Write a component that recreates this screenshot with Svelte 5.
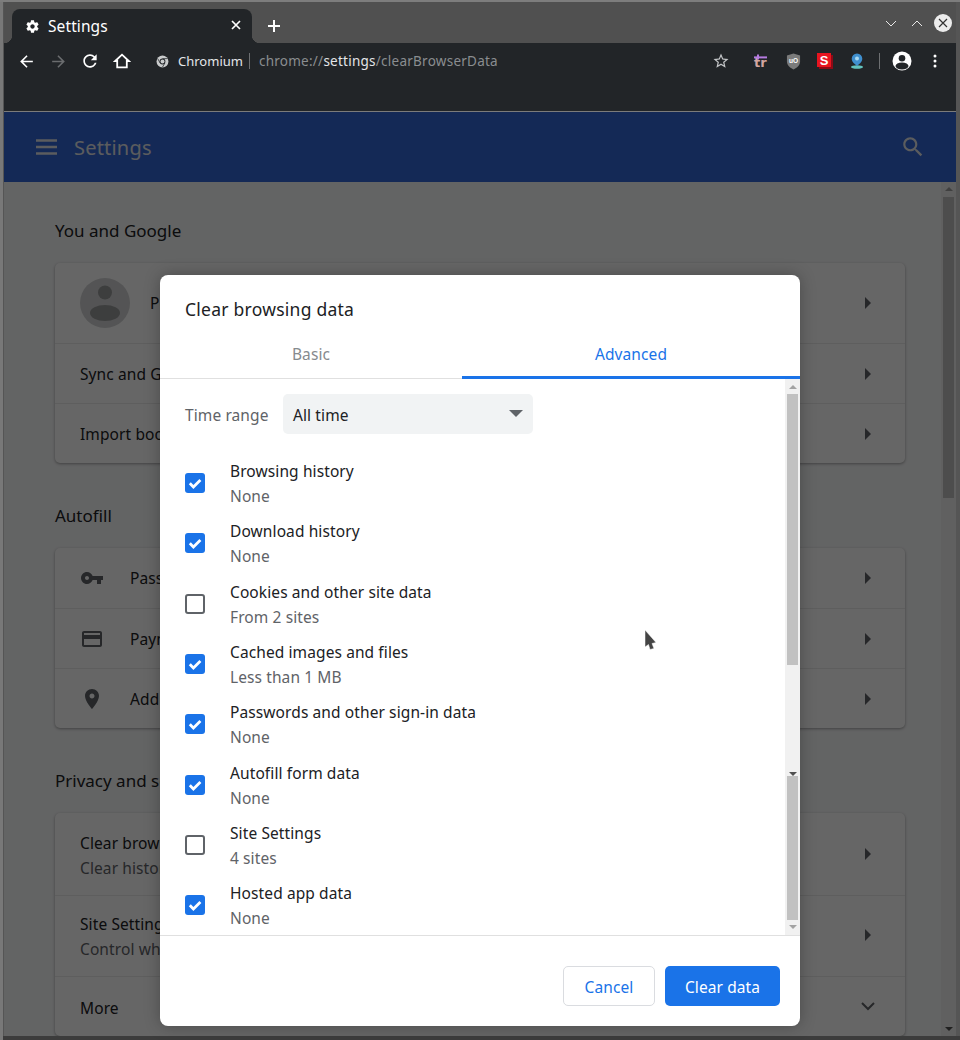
<script>
  const rows = [
    { t: 'Browsing history', s: 'None', c: true },
    { t: 'Download history', s: 'None', c: true },
    { t: 'Cookies and other site data', s: 'From 2 sites', c: false },
    { t: 'Cached images and files', s: 'Less than 1 MB', c: true },
    { t: 'Passwords and other sign-in data', s: 'None', c: true },
    { t: 'Autofill form data', s: 'None', c: true },
    { t: 'Site Settings', s: '4 sites', c: false },
    { t: 'Hosted app data', s: 'None', c: true }
  ];
  const icons = {
    key: 'M12.65 10C11.83 7.67 9.61 6 7 6c-3.31 0-6 2.69-6 6s2.69 6 6 6c2.61 0 4.83-1.67 5.65-4H17v4h4v-4h2v-4H12.65zM7 14c-1.1 0-2-.9-2-2s.9-2 2-2 2 .9 2 2-.9 2-2 2z',
    card: 'M20 4H4c-1.11 0-1.99.89-1.99 2L2 18c0 1.11.89 2 2 2h16c1.11 0 2-.89 2-2V6c0-1.11-.89-2-2-2zm0 14H4v-6h16v6zm0-10H4V6h16v2z',
    place: 'M12 2C8.13 2 5 5.13 5 9c0 5.25 7 13 7 13s7-7.75 7-13c0-3.87-3.13-7-7-7zm0 9.5c-1.38 0-2.5-1.12-2.5-2.5s1.12-2.5 2.5-2.5 2.5 1.12 2.5 2.5-1.12 2.5-2.5 2.5z'
  };
  const autofill = [
    { i: 'key', t: 'Passwords' },
    { i: 'card', t: 'Payment methods' },
    { i: 'place', t: 'Addresses and more' }
  ];
</script>

<div class="win">
  <div class="strip">
    <div class="tab">
      <svg class="gear" viewBox="0 0 24 24" width="15" height="15"><path fill="#fff" d="M19.43 12.98c.04-.32.07-.64.07-.98s-.03-.66-.07-.98l2.11-1.65c.19-.15.24-.42.12-.64l-2-3.46c-.12-.22-.39-.3-.61-.22l-2.49 1c-.52-.4-1.08-.73-1.69-.98l-.38-2.65C14.46 2.18 14.25 2 14 2h-4c-.25 0-.46.18-.49.42l-.38 2.65c-.61.25-1.17.59-1.69.98l-2.49-1c-.23-.09-.49 0-.61.22l-2 3.46c-.13.22-.07.49.12.64l2.11 1.65c-.04.32-.07.65-.07.98s.03.66.07.98l-2.11 1.65c-.19.15-.24.42-.12.64l2 3.46c.12.22.39.3.61.22l2.49-1c.52.4 1.08.73 1.69.98l.38 2.65c.03.24.24.42.49.42h4c.25 0 .46-.18.49-.42l.38-2.65c.61-.25 1.17-.59 1.69-.98l2.49 1c.23.09.49 0 .61-.22l2-3.46c.12-.22.07-.49-.12-.64l-2.11-1.65zM12 15.5c-1.93 0-3.5-1.57-3.5-3.5s1.57-3.5 3.5-3.5 3.5 1.57 3.5 3.5-1.57 3.5-3.5 3.5z"/></svg>
      <span class="tabtitle">Settings</span>
      <svg class="tabx" viewBox="0 0 10 10" width="10" height="10"><path d="M1 1l8 8M9 1l-8 8" stroke="#fff" stroke-width="1.7"/></svg>
    </div>
    <svg class="plus" viewBox="0 0 12 12" width="12" height="12"><path d="M6 0v12M0 6h12" stroke="#fff" stroke-width="2"/></svg>
    <div class="wctl">
      <svg class="wd" viewBox="0 0 12 7" width="12" height="7"><path d="M1 1l5 5 5-5" fill="none" stroke="#e8e8e8" stroke-width="1"/></svg>
      <svg class="wu" viewBox="0 0 12 7" width="12" height="7"><path d="M1 6l5-5 5 5" fill="none" stroke="#e8e8e8" stroke-width="1"/></svg>
      <div class="wclose"><svg viewBox="0 0 10 10" width="10" height="10"><path d="M1 1l8 8M9 1l-8 8" stroke="#333" stroke-width="1.2"/></svg></div>
    </div>
  </div>

  <div class="toolbar">
    <div class="tbrow">
      <div class="ib"><svg viewBox="0 0 24 24" width="19" height="19"><path fill="#fff" d="M20 11H7.83l5.59-5.59L12 4l-8 8 8 8 1.41-1.41L7.83 13H20v-2z"/></svg></div>
      <div class="ib"><svg viewBox="0 0 24 24" width="19" height="19"><path fill="#6a6c6e" d="M12 4l-1.41 1.41L16.17 11H4v2h12.17l-5.58 5.59L12 20l8-8z"/></svg></div>
      <div class="ib"><svg viewBox="0 0 24 24" width="20" height="20"><path fill="#fff" d="M17.65 6.35C16.2 4.9 14.21 4 12 4c-4.42 0-7.99 3.58-7.99 8s3.57 8 7.99 8c3.73 0 6.84-2.55 7.73-6h-2.08c-.82 2.33-3.04 4-5.65 4-3.31 0-6-2.69-6-6s2.69-6 6-6c1.66 0 3.14.69 4.22 1.78L13 11h7V4l-2.35 2.35z"/></svg></div>
      <div class="ib"><svg viewBox="0 0 24 24" width="18" height="18"><path fill="none" stroke="#fff" stroke-width="2.4" d="M3 12L12 3.6 21 12h-2.6v8.400H5.600V12z"/></svg></div>
      <div class="origin">
        <svg viewBox="0 0 14 14" width="13" height="13"><circle cx="7" cy="7" r="6.4" fill="#c9cbcc"/><circle cx="7" cy="7" r="3.1" fill="#222528"/><circle cx="7" cy="7" r="2.1" fill="#c9cbcc"/><path d="M7 3.9h5.4M4.4 8.6L1.9 4M9.6 8.6L7 13" stroke="#222528" stroke-width=".8"/></svg>
        <span class="oname">Chromium</span>
        <span class="osep"></span>
        <span class="url">chrome://<b>settings</b>/clearBrowserData</span>
      </div>
      <div class="tright">
        <div class="ib star"><svg viewBox="0 0 24 24" width="18" height="18"><path fill="#c4c6c8" d="M22 9.24l-7.19-.62L12 2 9.19 8.63 2 9.24l5.46 4.73L5.82 21 12 17.27 18.18 21l-1.63-7.03L22 9.24zM12 15.4l-3.76 2.27 1-4.28-3.32-2.88 4.38-.38L12 6.1l1.71 4.04 4.38.38-3.32 2.88 1 4.28L12 15.4z"/></svg></div>
        <div class="ib ext1"><svg viewBox="0 0 16 16" width="16" height="16"><text x="1" y="13.5" font-family="DejaVu Sans" font-weight="700" font-size="13" fill="#d3a6a0">tr</text><rect x="1" y="3.4" width="13" height="2" fill="#b57be0"/><rect x="4" y="1.5" width="2" height="5" fill="#b57be0"/></svg></div>
        <div class="ib"><svg viewBox="0 0 16 18" width="15" height="17"><path fill="#7b7b7b" d="M8 .5L15 2.6V9c0 4-3.2 6.8-7 8.4C4.200 15.800 1 13 1 9V2.600z"/><text x="8" y="11" text-anchor="middle" font-family="Liberation Sans" font-weight="700" font-size="7" fill="#fff">uO</text></svg></div>
        <div class="ib"><svg viewBox="0 0 16 16" width="16" height="16"><rect x="2" y="2" width="14" height="14" fill="#8e0a16"/><rect x="0" y="0" width="14" height="14" fill="#e8141f"/><text x="7" y="11.500" text-anchor="middle" font-family="Liberation Sans" font-weight="700" font-size="13" fill="#fff">S</text></svg></div>
        <div class="ib"><svg viewBox="0 0 14 16" width="14" height="16"><ellipse cx="7" cy="14" rx="6" ry="1.700" fill="#63c2bd"/><path fill="#3f8fce" d="M7 .5a5.300 5.300 0 0 1 5.300 5.300C12.300 8.800 9 11.500 7 13 5 11.500 1.700 8.800 1.700 5.800A5.300 5.300 0 0 1 7 .5z"/><circle cx="7" cy="5.500" r="2" fill="#a8d8f0"/></svg></div>
        <span class="tsep"></span>
        <div class="ib avatar"><svg viewBox="0 0 20 20" width="20" height="20"><defs><clipPath id="ac"><circle cx="10" cy="10" r="9.500"/></clipPath></defs><circle cx="10" cy="10" r="9.500" fill="#fff"/><circle cx="10" cy="7.200" r="3.300" fill="#222528"/><ellipse cx="10" cy="15" rx="6.500" ry="3.500" fill="#222528" clip-path="url(#ac)"/></svg></div>
        <div class="ib dots"><svg viewBox="0 0 4 14" width="4" height="14"><circle cx="2" cy="2" r="1.500" fill="#fff"/><circle cx="2" cy="7" r="1.500" fill="#fff"/><circle cx="2" cy="12" r="1.500" fill="#fff"/></svg></div>
      </div>
    </div>
  </div>

  <div class="content">
    <header class="hdr">
      <div class="hleft">
        <svg viewBox="0 0 21 16" width="21" height="16"><path d="M0 1.500h21M0 8h21M0 14.500h21" stroke="#e3e6ea" stroke-width="2.400"/></svg>
        <span class="htitle">Settings</span>
      </div>
      <svg class="hsearch" viewBox="0 0 24 24" width="26" height="26"><path fill="#e3e6ea" d="M15.500 14h-.79l-.28-.27C15.410 12.590 16 11.110 16 9.500 16 5.910 13.090 3 9.500 3S3 5.910 3 9.500 5.910 16 9.500 16c1.610 0 3.090-.59 4.230-1.570l.27.28v.79l5 4.990L20.490 19l-4.990-5zm-6 0C7.010 14 5 11.990 5 9.500S7.010 5 9.500 5 14 7.010 14 9.500 11.990 14 9.500 14z"/></svg>
    </header>

    <div class="pagewrap">
      <main class="page">
        <h2>You and Google</h2>
        <section class="card">
          <div class="row person">
            <svg class="av" viewBox="0 0 50 50" width="50" height="50"><circle cx="25" cy="25" r="25" fill="#d2d3d4"/><circle cx="25" cy="14.500" r="7" fill="#9a9b9c"/><ellipse cx="25" cy="35" rx="15" ry="8" fill="#9a9b9c"/></svg>
            <span>Person</span><i class="tri"></i>
          </div>
          <div class="row"><span>Sync and Google services</span><i class="tri"></i></div>
          <div class="row"><span>Import bookmarks and settings</span><i class="tri"></i></div>
        </section>

        <h2>Autofill</h2>
        <section class="card">
          {#each autofill as a}
            <div class="row">
              <svg class="ric" viewBox="0 0 24 24" width="24" height="24"><path fill="#5f6368" d={icons[a.i]}/></svg>
              <span>{a.t}</span><i class="tri"></i>
            </div>
          {/each}
        </section>

        <h2>Privacy and security</h2>
        <section class="card">
          <div class="row tall first"><div class="two"><span>Clear browsing data</span><small>Clear history, cookies, cache, and more</small></div><i class="tri"></i></div>
          <div class="row tall second"><div class="two"><span>Site Settings</span><small>Control what information websites can use</small></div><i class="tri"></i></div>
          <div class="row last"><span>More</span><svg class="more" viewBox="0 0 14 9" width="14" height="9"><path d="M1 1l6 6 6-6" fill="none" stroke="#5f6368" stroke-width="2"/></svg></div>
        </section>
      </main>
      <div class="pscroll">
        <i class="up"></i>
        <div class="pthumb"></div>
        <i class="down"></i>
      </div>
    </div>

    <div class="scrim"></div>

    <div class="dialog">
      <h1>Clear browsing data</h1>
      <div class="tabs">
        <div class="t basic">Basic</div>
        <div class="t adv">Advanced</div>
      </div>
      <div class="dbody">
        <div class="list">
          <div class="time">
            <span class="tl">Time range</span>
            <div class="sel"><span>All time</span><i></i></div>
          </div>
          {#each rows as r}
            <div class="item">
              <div class="cb" class:on={r.c}>
                {#if r.c}
                  <svg viewBox="0 0 20 20" width="20" height="20"><path d="M4.800 10.300l3.600 3.600L15.400 6.900" fill="none" stroke="#fff" stroke-width="2.800"/></svg>
                {/if}
              </div>
              <div class="txt"><div class="it">{r.t}</div><div class="is">{r.s}</div></div>
            </div>
          {/each}
        </div>
        <div class="dscroll">
          <i class="dup"></i>
          <div class="th1"></div>
          <i class="ddown dark"></i>
          <div class="th2"></div>
          <i class="ddown"></i>
        </div>
      </div>
      <div class="foot">
        <button class="cancel">Cancel</button>
        <button class="clear">Clear data</button>
      </div>
    </div>

    <svg class="cursor" viewBox="0 0 13 22" width="13" height="22"><path d="M1 1V18L4.500 15.500 6 20.500 10 19.500 8 14.500 12 13.500Z" fill="#444" stroke="#fff" stroke-width=".5"/></svg>
  </div>
</div>

<style>
  :global(body) { margin: 0; background: #3a3a3a; }
  * { box-sizing: border-box; }
  .win {
    width: 960px; height: 1040px; overflow: hidden; position: relative;
    display: flex; flex-direction: column;
    padding: 2px 4px 4px 4px;
    background: #555;
    font-family: "Noto Sans", sans-serif;
    color: #202124;
    box-shadow: inset 0 2px 0 #7d7d7d, inset 3px 0 0 #787878, inset 0 -4px 0 #3c3c3c;
  }
  .strip { height: 41px; flex: none; background: #505050; display: flex; align-items: flex-end; padding-left: 8px; position: relative; }
  .tab {
    width: 240px; height: 34px; background: #222528; border-radius: 8px 8px 0 0;
    display: flex; align-items: center; padding: 0 0 0 14px; position: relative; color: #fff;
  }
  .tab::before, .tab::after {
    content: ""; position: absolute; bottom: 0; width: 8px; height: 8px;
  }
  .tab::before { left: -8px; background: radial-gradient(circle at 0 0, transparent 8px, #222528 8.500px); }
  .tab::after { right: -8px; background: radial-gradient(circle at 100% 0, transparent 8px, #222528 8.500px); }
  .gear { margin-left: -1px; }
  .tabtitle { margin-left: 8px; font-size: 15.500px; letter-spacing: .1px; flex: 1; }
  .tabx { margin-right: 11px; margin-top: -2px; }
  .plus { margin: 0 0 11px 16px; }
  .wctl { margin-left: auto; display: flex; align-items: center; margin-bottom: 11px; padding-right: 4px; }
  .wd { margin-right: 14px; margin-left: -1px; }
  .wu { margin-right: 11px; }
  .wclose { width: 18px; height: 18px; border-radius: 50%; background: #ececec; display: flex; align-items: center; justify-content: center; }
  .toolbar { flex: none; background: #222528; border-bottom: 1px solid #7b7b7b; height: 69px; }
  .tbrow { height: 36px; display: flex; align-items: center; padding: 0 5px 0 6px; }
  .ib { width: 32px; height: 32px; flex: none; display: flex; align-items: center; justify-content: center; }
  .origin { display: flex; align-items: center; margin-left: 18px; white-space: nowrap; }
  .oname { margin-left: 9px; color: #e4e6e8; font-size: 13px; }
  .osep { width: 1px; height: 16px; background: #6d6f71; margin: 0 9px 0 6px; }
  .url { color: #8a8d90; letter-spacing: .25px; font-size: 13.500px; }
  .url b { font-weight: 400; color: #e4e6e8; }
  .tright { margin-left: auto; display: flex; align-items: center; }
  .star { margin-right: 8px; }
  .tsep { width: 1px; height: 16px; background: #6d6f71; margin: 0 6px; }
  .dots { margin-left: 1px; }
  .content { flex: 1; min-height: 0; position: relative; display: flex; flex-direction: column; }
  .hdr { height: 70px; flex: none; background: #3367d6; display: flex; align-items: center; justify-content: space-between; padding: 0 30px 0 32px; }
  .hleft { display: flex; align-items: center; }
  .htitle { margin-left: 17px; font-size: 20px; color: #e3e6ea; letter-spacing: .2px; padding-top: 1px; }
  .pagewrap { flex: 1; min-height: 0; display: flex; background: #f8f9fa; }
  .page { flex: 1; min-width: 0; padding: 34px 36px 0 51px; overflow: hidden; }
  h2 { margin: 0 0 17px; font-size: 17px; font-weight: 400; line-height: 30px; height: 30px; }
  .card { background: #fff; border-radius: 5px; box-shadow: 0 1px 3px rgba(0,0,0,.35); margin-bottom: 38px; }
  .row { height: 60px; display: flex; align-items: center; padding: 0 25px; font-size: 15.500px; border-top: 1px solid #ebebeb; position: relative; letter-spacing: .1px; }
  .row:first-child { border-top: 0; }
  .person { height: 80px; }
  .tall { height: 81px; }
  .tall.first { height: 82px; }
  .last > span { padding-top: 3px; }
  .av { margin-right: 20px; }
  .ric { margin-right: 26px; }
  .tri { margin-left: auto; width: 0; height: 0; border-left: 6px solid #5f6368; border-top: 6px solid transparent; border-bottom: 6px solid transparent; margin-right: 9px; }
  .second .tri { margin-top: -2px; }
  .more { margin-left: auto; margin-right: 5px; }
  .two { display: flex; flex-direction: column; line-height: 25px; margin-top: 3px; }
  .second .two { margin-top: 1px; }
  small { font-size: 15.500px; color: #5f6368; }
  .pscroll { width: 15px; flex: none; background: #f1f1f1; display: flex; flex-direction: column; align-items: center; padding-top: 5px; }
  .pthumb { width: 11px; height: 301px; background: #c1c1c1; margin-top: 6px; }
  .up { width: 0; height: 0; border: 4px solid transparent; border-top: 0; border-bottom: 4px solid #a0a0a0; }
  .pscroll .down { width: 0; height: 0; border: 4px solid transparent; border-bottom: 0; border-top: 4px solid #505050; margin-top: auto; margin-bottom: 5px; }
  .scrim { position: absolute; inset: 0; background: rgba(0,0,0,.6); }
  .dialog {
    position: absolute; left: 156px; top: 163px; width: 640px; height: 751px;
    background: #fff; border-radius: 8px; overflow: hidden;
    display: flex; flex-direction: column;
    box-shadow: 0 0 16px rgba(0,0,0,.28);
  }
  h1 { margin: 0; height: 65px; flex: none; padding: 19px 25px 0; font-size: 17.500px; line-height: 30px; font-weight: 400; letter-spacing: .25px; }
  .tabs { height: 39px; flex: none; display: flex; border-bottom: 1px solid #e0e0e0; font-size: 15.500px; letter-spacing: .1px; }
  .t { display: flex; align-items: center; justify-content: center; height: 39px; }
  .basic { width: 302px; color: #868a8e; padding-bottom: 12px; }
  .adv { flex: 1; color: #1a73e8; border-bottom: 3px solid #1a73e8; padding-bottom: 8px; }
  .dbody { height: 557px; flex: none; display: flex; border-bottom: 1px solid #e0e0e0; }
  .list { flex: 1; padding: 15px 0 0 25px; overflow: hidden; }
  .time { display: flex; align-items: center; height: 40px; margin-bottom: 19px; }
  .tl { font-size: 15.500px; color: #5f6368; width: 98px; letter-spacing: .1px; padding-top: 1px; }
  .sel { width: 250px; height: 40px; background: #f1f3f4; border-radius: 5px; display: flex; align-items: center; justify-content: space-between; padding: 1px 10px 0; font-size: 15.500px; letter-spacing: .1px; }
  .sel i { width: 0; height: 0; border: 7px solid transparent; border-bottom: 0; border-top: 7px solid #5f6368; margin-top: -3px; }
  .item { height: 60.330px; display: flex; align-items: center; }
  .cb { width: 20px; height: 20px; border-radius: 3px; border: 2px solid #5f6368; flex: none; margin-right: 25px; }
  .cb.on { background: #1a73e8; border: 0; }
  .cb svg { display: block; }
  .txt { line-height: 25px; font-size: 15.500px; letter-spacing: .1px; margin-top: 2px; }
  .is { color: #5f6368; }
  .dscroll { width: 15px; flex: none; background: #f1f1f1; display: flex; flex-direction: column; align-items: center; padding: 6px 0 0 0; }
  .dup { width: 0; height: 0; border: 4px solid transparent; border-top: 0; border-bottom: 4px solid #a3a3a3; }
  .th1 { width: 11px; height: 271px; background: #c1c1c1; margin-top: 5px; }
  .ddown { width: 0; height: 0; border: 4px solid transparent; border-bottom: 0; border-top: 4px solid #a3a3a3; margin-top: 5px; }
  .ddown.dark { border-top-color: #505050; margin-top: 107px; }
  .th2 { width: 11px; height: 144px; background: #c1c1c1; margin-top: 0; }
  .foot { flex: 1; display: flex; justify-content: flex-end; padding: 30px 20px 0; gap: 10px; }
  button { height: 40px; border-radius: 5px; font: inherit; font-size: 15.500px; letter-spacing: .1px; padding: 1px 0 0; }
  .cancel { width: 92px; background: #fff; border: 1px solid #dadce0; color: #1a73e8; }
  .clear { width: 115px; background: #1a73e8; border: 0; color: #fff; }
  .cursor { position: absolute; left: 640px; top: 517px; }
</style>
